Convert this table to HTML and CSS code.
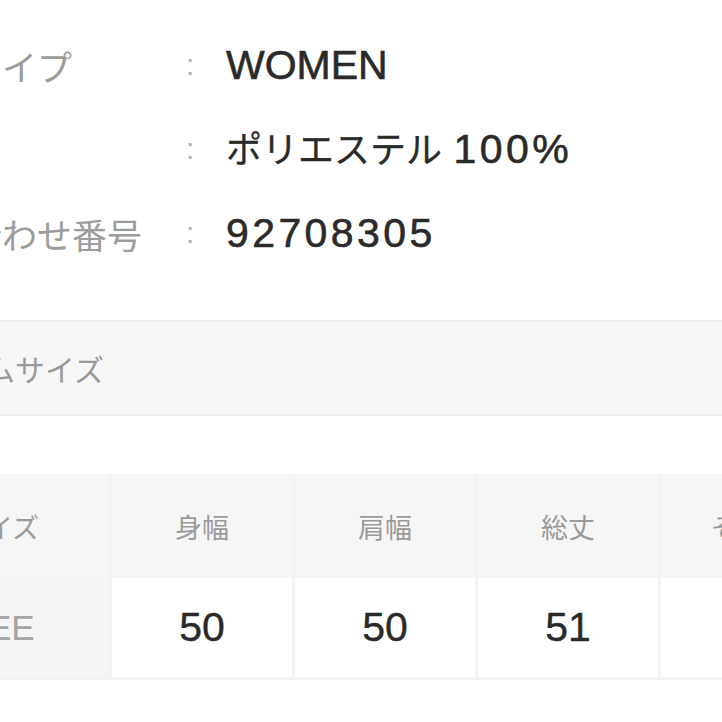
FILE: index.html
```html
<!DOCTYPE html>
<html lang="ja">
<head>
<meta charset="utf-8">
<title>商品情報</title>
<link rel="stylesheet" href="styles.css">
</head>
<body>
<main class="page">
  <dl class="specs">
    <div class="spec-row">
      <dt class="label">商品タイプ</dt>
      <dd class="colon">:</dd>
      <dd class="value">WOMEN</dd>
    </div>
    <div class="spec-row">
      <dt class="label">素材</dt>
      <dd class="colon">:</dd>
      <dd class="value"><span class="kana">ポリエステル</span> <span class="num">100%</span></dd>
    </div>
    <div class="spec-row">
      <dt class="label">問い合わせ番号</dt>
      <dd class="colon">:</dd>
      <dd class="value"><span class="num code">92708305</span></dd>
    </div>
  </dl>

  <div class="band">アイテムサイズ</div>

  <div class="size-table">
    <div class="cell head">サイズ</div>
    <div class="cell head">身幅</div>
    <div class="cell head">肩幅</div>
    <div class="cell head">総丈</div>
    <div class="cell head">そで丈</div>
    <div class="cell size-name">FREE</div>
    <div class="cell measure">50</div>
    <div class="cell measure">50</div>
    <div class="cell measure">51</div>
    <div class="cell measure">60</div>
  </div>
</main>
</body>
</html>
```

FILE: styles.css
```css
html, body {
  margin: 0;
  padding: 0;
  background: #ffffff;
}

body {
  width: 722px;
  height: 722px;
  overflow: hidden;
  font-family: "Noto Sans CJK JP", "Noto Sans", sans-serif;
}

.page {
  margin-left: -103px;
  width: 1100px;
  padding-top: 23px;
}

.specs {
  margin: 0;
}

.spec-row {
  display: grid;
  grid-template-columns: 289px 40px 1fr;
  align-items: center;
  height: 84px;
}

.spec-row dd {
  margin: 0;
}

.label {
  font-size: 35px;
  line-height: 1;
  color: #9c9c9c;
  white-space: nowrap;
}

.colon {
  font-family: "Liberation Sans", Arial, sans-serif;
  font-size: 30px;
  line-height: 1;
  color: #b0b0b0;
}

.value {
  font-family: "Liberation Sans", "Noto Sans CJK JP", sans-serif;
  font-size: 41px;
  line-height: 1;
  color: #2a2a2a;
  white-space: nowrap;
  -webkit-text-stroke: 0.6px #2a2a2a;
}

.kana {
  font-family: "Noto Sans CJK JP", sans-serif;
  font-size: 36px;
  -webkit-text-stroke: 0.3px #2a2a2a;
}

.num {
  letter-spacing: 3.5px;
}

.code {
  letter-spacing: 3.4px;
}

.band {
  box-sizing: border-box;
  margin-top: 45px;
  height: 96px;
  display: flex;
  align-items: center;
  padding-left: 1px;
  background: #f7f7f7;
  border-top: 2px solid #ebebeb;
  border-bottom: 2px solid #ebebeb;
  font-size: 30px;
  color: #9a9a9a;
}

.size-table {
  margin-top: 58px;
  margin-left: -8px;
  display: grid;
  grid-template-columns: 220px repeat(4, 180px);
  grid-template-rows: 104px 99px;
  column-gap: 3px;
  background: #f3f3f3;
  padding-bottom: 3px;
}

.cell {
  display: flex;
  align-items: center;
  justify-content: center;
  line-height: 1;
}

.head {
  background: #f6f6f6;
  font-size: 27px;
  color: #9a9a9a;
}

.size-name {
  background: #f5f5f5;
  font-family: "Liberation Sans", sans-serif;
  font-size: 35px;
  color: #a4a4a4;
  padding-right: 22px;
}

.measure {
  background: #ffffff;
  font-family: "Liberation Sans", sans-serif;
  font-size: 41px;
  color: #2a2a2a;
  -webkit-text-stroke: 0.4px #2a2a2a;
}
```
